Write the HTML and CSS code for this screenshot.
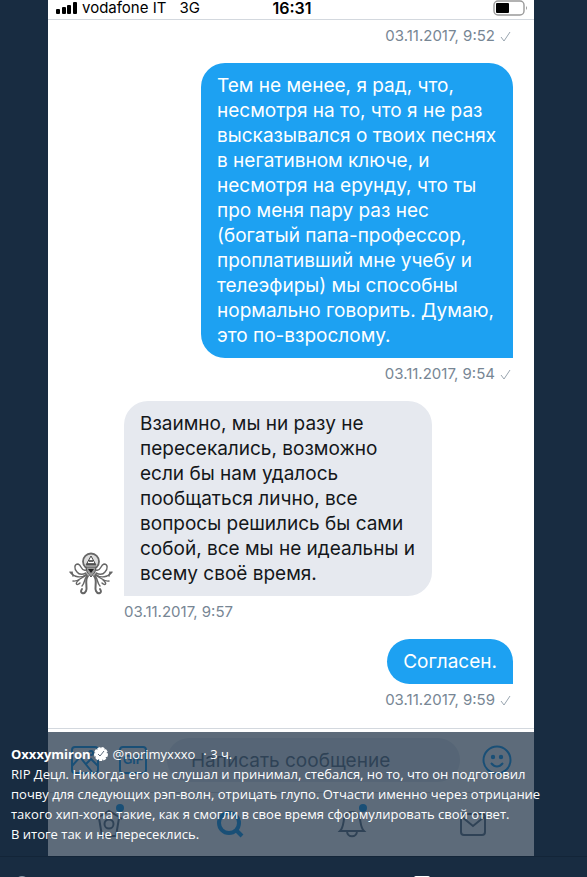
FILE: index.html
```html
<!DOCTYPE html>
<html lang="ru">
<head>
    <meta charset="UTF-8">
    <meta name="viewport" content="width=device-width, initial-scale=1.0">
    <title>Oxxxymiron</title>
    <link rel="stylesheet" href="styles.css">
</head>
<body>
    <main class="viewer">
        <div class="phone">
            <header class="status-bar">
                <div class="carrier">
                    <svg class="signal" width="21" height="12" viewBox="0 0 21 12">
                        <rect x="0" y="7" width="4" height="5" rx="1"/>
                        <rect x="6" y="5" width="4" height="7" rx="1"/>
                        <rect x="11" y="3" width="4" height="9" rx="1"/>
                        <rect x="17" y="0" width="4" height="12" rx="1"/>
                    </svg>
                    <span>vodafone IT</span>
                    <span class="network">3G</span>
                </div>
                <div class="clock">16:31</div>
                <svg class="battery" width="35" height="16" viewBox="0 0 35 16">
                    <rect x="1" y="1" width="30" height="14" rx="4" fill="#fff" stroke="#999" stroke-width="1.4"/>
                    <rect x="3" y="3" width="13" height="10" rx="1"/>
                    <path d="M33 6q2 2 0 4z" fill="#999"/>
                </svg>
            </header>

            <section class="chat">
                <div class="time sent-time">03.11.2017, 9:52
                    <svg class="check" width="11" height="11" viewBox="0 0 11 11"><path d="M1 6l3 4L10 1"/></svg>
                </div>
                <div class="message sent">
                    <p class="bubble">Тем не менее, я рад, что, несмотря на то, что я не раз высказывался о твоих песнях в негативном ключе, и несмотря на ерунду, что ты про меня пару раз нес (богатый папа-профессор, проплативший мне учебу и телеэфиры) мы способны нормально говорить. Думаю, это по-взрослому.</p>
                    <div class="time sent-time">03.11.2017, 9:54
                        <svg class="check" width="11" height="11" viewBox="0 0 11 11"><path d="M1 6l3 4L10 1"/></svg>
                    </div>
                </div>
                <div class="message received">
                    <svg class="avatar" width="44" height="44" viewBox="0 0 44 44">
                        <g fill="none" stroke="#666" stroke-width="1.4" stroke-linecap="round">
                            <path d="M17 18C12 20 13 13 9 12C5 12 5 17 8 20C11 24 15 22 17 21"/>
                            <path d="M27 18C32 20 31 13 35 12C39 12 39 17 36 20C33 24 29 22 27 21"/>
                            <path d="M18 22C12 27 5 25 1 20M4 24L3 20M26 22C32 27 39 25 43 20M40 24L41 20"/>
                            <path d="M18 23C12 25 10 30 4 29M10 28C5 32 8 34 11 31M26 23C32 25 34 30 40 29M34 28C39 32 36 34 33 31"/>
                            <path d="M19 24C15 29 19 35 17 39C15 43 10 41 13 37M25 24C29 29 25 35 27 39C29 43 34 41 31 37" stroke-width="2"/>
                            <path d="M18 24C15 27 16 31 13 34M26 24C29 27 28 31 31 34"/>
                        </g>
                        <circle cx="22" cy="9.5" r="8" fill="#ddd" stroke="#666" stroke-width="1.8"/>
                        <path d="M22 4l-5 9h10z" fill="#fff" stroke="#444"/>
                        <path d="M20 9h4M18 12h8" stroke="#333" stroke-width="1.5"/>
                        <path d="M17 15h10l-1 5-4 5-4-5z" fill="#999" stroke="#555"/>
                        <path d="M19 17h6l-3 4z" fill="#222"/>
                    </svg>
                    <p class="bubble">Взаимно, мы ни разу не пересекались, возможно если бы нам удалось пообщаться лично, все вопросы решились бы сами собой, все мы не идеальны и всему своё время.</p>
                    <div class="time">03.11.2017, 9:57</div>
                </div>
                <div class="message sent">
                    <p class="bubble">Согласен.</p>
                    <div class="time sent-time">03.11.2017, 9:59
                        <svg class="check" width="11" height="11" viewBox="0 0 11 11"><path d="M1 6l3 4L10 1"/></svg>
                    </div>
                </div>
            </section>

            <form class="composer">
                <button type="button" class="icon-button" aria-label="Фото">
                    <svg width="28" height="28" viewBox="0 0 28 28">
                        <rect x="1" y="1" width="26" height="26" rx="3"/>
                        <path d="M1 20l8-9 12 15M15 18l5-5 7 7"/>
                        <circle cx="20" cy="7" r="2"/>
                    </svg>
                </button>
                <button type="button" class="icon-button" aria-label="GIF">
                    <svg width="28" height="28" viewBox="0 0 28 28">
                        <rect x="1" y="1" width="26" height="26" rx="3"/>
                        <text x="14" y="18" text-anchor="middle">GIF</text>
                    </svg>
                </button>
                <input class="message-input" type="text" placeholder="Написать сообщение" aria-label="Написать сообщение">
                <button type="button" class="icon-button" aria-label="Смайлик">
                    <svg width="30" height="30" viewBox="0 0 30 30">
                        <circle cx="15" cy="15" r="13.5"/>
                        <path d="M9 18q6 7 12 0"/>
                        <circle class="filled" cx="11" cy="12" r="1.2"/>
                        <circle class="filled" cx="19" cy="12" r="1.2"/>
                    </svg>
                </button>
            </form>

            <nav class="tabs">
                <a href="#" aria-label="Главная">
                    <svg width="32" height="36" viewBox="0 0 32 36">
                        <path d="M3 15l3-2 10-6 10 6 3 2M6 14l3 18h14l3-18"/>
                        <circle cx="16" cy="20" r="4.5"/>
                        <circle class="dot" cx="27" cy="4" r="4"/>
                    </svg>
                </a>
                <a href="#" class="active" aria-label="Поиск">
                    <svg width="32" height="36" viewBox="0 0 32 36">
                        <circle cx="15" cy="19" r="10"/>
                        <path d="M22 26l6 6"/>
                    </svg>
                </a>
                <a href="#" aria-label="Уведомления">
                    <svg width="32" height="36" viewBox="0 0 32 36">
                        <path d="M4 27h24c-3-3-3-6-4-12-1-5-4-7-8-7s-7 2-8 7c-1 6-1 9-4 12zM11 27c0 7 10 7 10 0"/>
                        <circle class="dot" cx="27" cy="4" r="4"/>
                    </svg>
                </a>
                <a href="#" aria-label="Сообщения">
                    <svg width="32" height="36" viewBox="0 0 32 36">
                        <rect x="4" y="10" width="24" height="21" rx="3"/>
                        <path d="M5 13l11 9 11-9"/>
                    </svg>
                </a>
            </nav>
        </div>

        <article class="caption">
            <div class="author">
                <a href="#" class="name">Oxxxymiron</a>
                <svg class="verified" width="14" height="14" viewBox="0 0 14 14">
                    <circle cx="7" cy="7" r="6" fill="#fff" stroke="#fff" stroke-width="2" stroke-dasharray="3 1"/>
                    <path d="M4 7l2 2 4-5" fill="none" stroke="#5d6b7a"/>
                </svg>
                <a href="#" class="handle">@norimyxxxo</a>
                <span class="age">· 3 ч.</span>
            </div>
            <p>RIP Децл. Никогда его не слушал и принимал, стебался, но то, что он подготовил почву для следующих рэп-волн, отрицать глупо. Отчасти именно через отрицание такого хип-хопа такие, как я смогли в свое время сформулировать свой ответ.<br>В итоге так и не пересеклись.</p>
        </article>
    </main>

    <footer class="actions">
        <svg width="14" height="14" viewBox="0 0 14 14"><circle cx="7" cy="7" r="6" fill="none" stroke="#8899a6" stroke-width="2"/></svg>
        <svg width="16" height="14" viewBox="0 0 16 14"><rect width="16" height="14" rx="2" fill="#fff"/></svg>
    </footer>
</body>
</html>
```
FILE: styles.css
```css
* {
    box-sizing: border-box;
}
body {
    margin: 0;
    background: #182c41;
    font-family: 'Inter', 'Liberation Sans', sans-serif;
    color: #14171a;
}
p {
    margin: 0;
}
a {
    color: inherit;
    text-decoration: none;
}
.viewer {
    position: relative;
}
.phone {
    margin: 0 53px 0 48px;
    background: #fff;
}

/* status bar */
.status-bar {
    display: grid;
    grid-template-columns: 1fr auto 1fr;
    align-items: center;
    height: 20px;
    padding: 0 6px 8px 8px;
    border-bottom: 1px solid #d3d8de;
    font-size: 15px;
    line-height: 12px;
    color: #000;
}
.carrier {
    display: flex;
    align-items: center;
    gap: 5px;
}
.network {
    margin-left: 8px;
}
.clock {
    font-size: 16px;
    font-weight: 600;
}
.battery {
    justify-self: end;
}

/* messages */
.chat {
    display: flex;
    flex-direction: column;
    gap: 17px;
    padding: 6px 21px 18px;
}
.message {
    display: grid;
    row-gap: 6px;
}
.sent {
    justify-items: end;
}
.received {
    grid-template-columns: 44px 1fr;
    column-gap: 11px;
    justify-items: start;
}
.received .time {
    grid-column: 2;
}
.avatar {
    align-self: end;
}
.bubble {
    max-width: 312px;
    padding: 10px 16px;
    border-radius: 24px;
    font-size: 19px;
    line-height: 25px;
}
.sent .bubble {
    background: #1da1f2;
    color: #fff;
    border-bottom-right-radius: 0;
}
.received .bubble {
    max-width: 308px;
    background: #e6e9ef;
    border-bottom-left-radius: 0;
}
.time {
    font-size: 15px;
    line-height: 20px;
    color: #778694;
}
.sent-time {
    display: flex;
    justify-content: flex-end;
    align-items: center;
    gap: 5px;
}
.check {
    margin-right: 2px;
    fill: none;
    stroke: #99a5af;
    stroke-width: 1;
}

/* composer */
.composer {
    display: flex;
    align-items: center;
    padding: 9px 22px 10px 23px;
    border-top: 1px solid #d3d8de;
    border-bottom: 1px solid #d3d8de;
}
.icon-button {
    display: flex;
    flex: none;
    margin-right: 20px;
    padding: 0;
    border: none;
    background: none;
}
.icon-button svg {
    fill: none;
    stroke: #1da1f2;
    stroke-width: 2;
}
.icon-button text {
    font-size: 12px;
    font-weight: 800;
    fill: #1da1f2;
    stroke: none;
}
.icon-button .filled {
    fill: #1da1f2;
}
.message-input {
    flex: 1;
    min-width: 0;
    height: 44px;
    margin-right: 22px;
    padding: 0 24px;
    border: none;
    border-radius: 22px;
    background: #e6ecf0;
    font-family: inherit;
    font-size: 19px;
}
.message-input::placeholder {
    color: #657786;
    opacity: 1;
}
.icon-button:last-child {
    margin-right: 0;
}

/* tab bar */
.tabs {
    display: grid;
    grid-template-columns: repeat(4, 1fr);
    height: 63px;
    padding-top: 11px;
}
.tabs a {
    display: flex;
    justify-content: center;
}
.tabs svg {
    fill: none;
    stroke: #657786;
    stroke-width: 2;
}
.tabs .active svg {
    stroke: #1da1f2;
    stroke-width: 4;
}
.tabs .dot {
    fill: #1da1f2;
    stroke: none;
}

/* tweet over the photo */
.caption {
    position: absolute;
    left: 0;
    right: 0;
    bottom: 0;
    padding: 12px 36px 12px 11px;
    background: rgba(24, 44, 65, 0.7);
    font-family: 'Open Sans', 'Noto Sans', sans-serif;
    font-size: 13px;
    font-weight: 500;
    line-height: 20px;
    color: #fff;
}
.author {
    display: flex;
    align-items: center;
}
.name {
    font-weight: 700;
}
.verified {
    margin: 0 5px 0 3px;
}
.age {
    margin-left: 8px;
}

.actions {
    display: flex;
    justify-content: space-between;
    height: 21px;
    padding: 19px 157px 0 15px;
    border-top: 1px solid #132538;
    overflow: hidden;
}
```
